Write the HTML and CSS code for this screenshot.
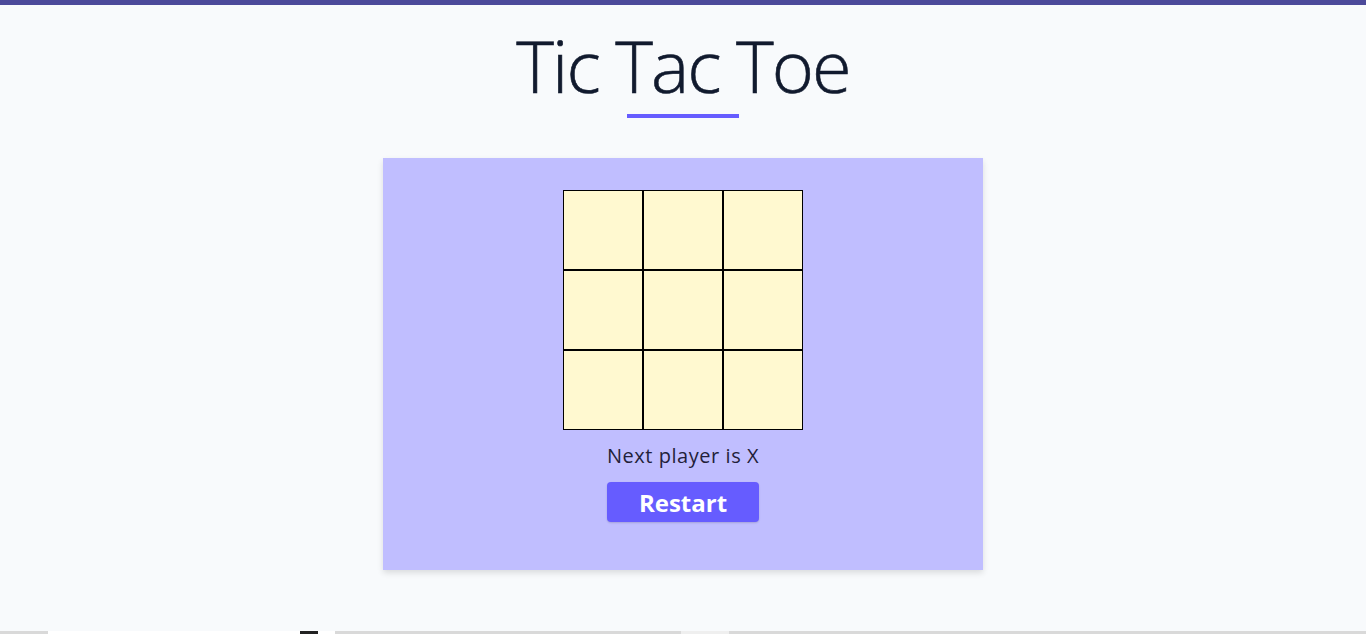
FILE: index.html
```html
<!DOCTYPE html>
<html lang="en">
<head>
<meta charset="utf-8">
<title>Tic Tac Toe</title>
<link rel="stylesheet" href="styles.css">
</head>
<body>
<div class="topbar"></div>
<main class="page">
  <h1 class="title">Tic Tac Toe</h1>
  <div class="title-underline"></div>
  <section class="card">
    <div class="board">
      <button class="cell"></button>
      <button class="cell"></button>
      <button class="cell"></button>
      <button class="cell"></button>
      <button class="cell"></button>
      <button class="cell"></button>
      <button class="cell"></button>
      <button class="cell"></button>
      <button class="cell"></button>
    </div>
    <p class="status">Next player is X</p>
    <button class="restart">Restart</button>
  </section>
</main>
<div class="taskstrip">
  <span class="strip-box"><span class="strip-icon"></span></span>
  <span class="strip-light"></span>
</div>
</body>
</html>
```
FILE: styles.css
```css
html, body {
  margin: 0;
  padding: 0;
}
body {
  background: #f8fafc;
  font-family: "Open Sans", "Noto Sans", sans-serif;
  min-height: 634px;
}
.topbar {
  height: 5px;
  background: #4c4a9a;
}
.page {
  display: flex;
  flex-direction: column;
  align-items: center;
}
.title {
  margin: 17px 0 0;
  font-size: 72px;
  line-height: 86px;
  font-weight: 300;
  letter-spacing: -2px;
  -webkit-text-stroke: 0.6px #111a2e;
  color: #111a2e;
}
.title-underline {
  width: 112px;
  height: 4px;
  margin-top: 6px;
  background: #665cff;
}
.card {
  margin-top: 40px;
  width: 600px;
  box-sizing: border-box;
  padding: 32px 0 48px;
  background: #c0beff;
  box-shadow: 0 3px 6px rgba(0, 0, 0, 0.12);
  display: flex;
  flex-direction: column;
  align-items: center;
}
.board {
  display: grid;
  grid-template-columns: repeat(3, 80px);
  grid-template-rows: repeat(3, 80px);
}
.cell {
  margin: 0;
  padding: 0;
  border: 1px solid #000;
  background: #fff9d0;
  box-sizing: border-box;
}
.status {
  margin: 12px 0 0;
  font-size: 20px;
  line-height: 27px;
  letter-spacing: 0.55px;
  color: #231f3a;
}
.restart {
  margin-top: 13px;
  width: 152px;
  height: 40px;
  border: none;
  border-radius: 4px;
  background: #665cff;
  color: #fff;
  font-family: "Open Sans", "Noto Sans", sans-serif;
  font-weight: 700;
  font-size: 24px;
  box-shadow: 0 1px 2px rgba(0, 0, 0, 0.15);
}
.taskstrip {
  position: fixed;
  left: 0;
  right: 0;
  bottom: 0;
  height: 3px;
  background: #d9d9d9;
}
.strip-box {
  position: absolute;
  left: 48px;
  width: 287px;
  top: 0;
  height: 3px;
  background: #fff;
}
.strip-icon {
  position: absolute;
  left: 252px;
  width: 18px;
  height: 3px;
  background: #222;
}
.strip-light {
  position: absolute;
  left: 681px;
  width: 48px;
  top: 0;
  height: 3px;
  background: #efefef;
}
```
